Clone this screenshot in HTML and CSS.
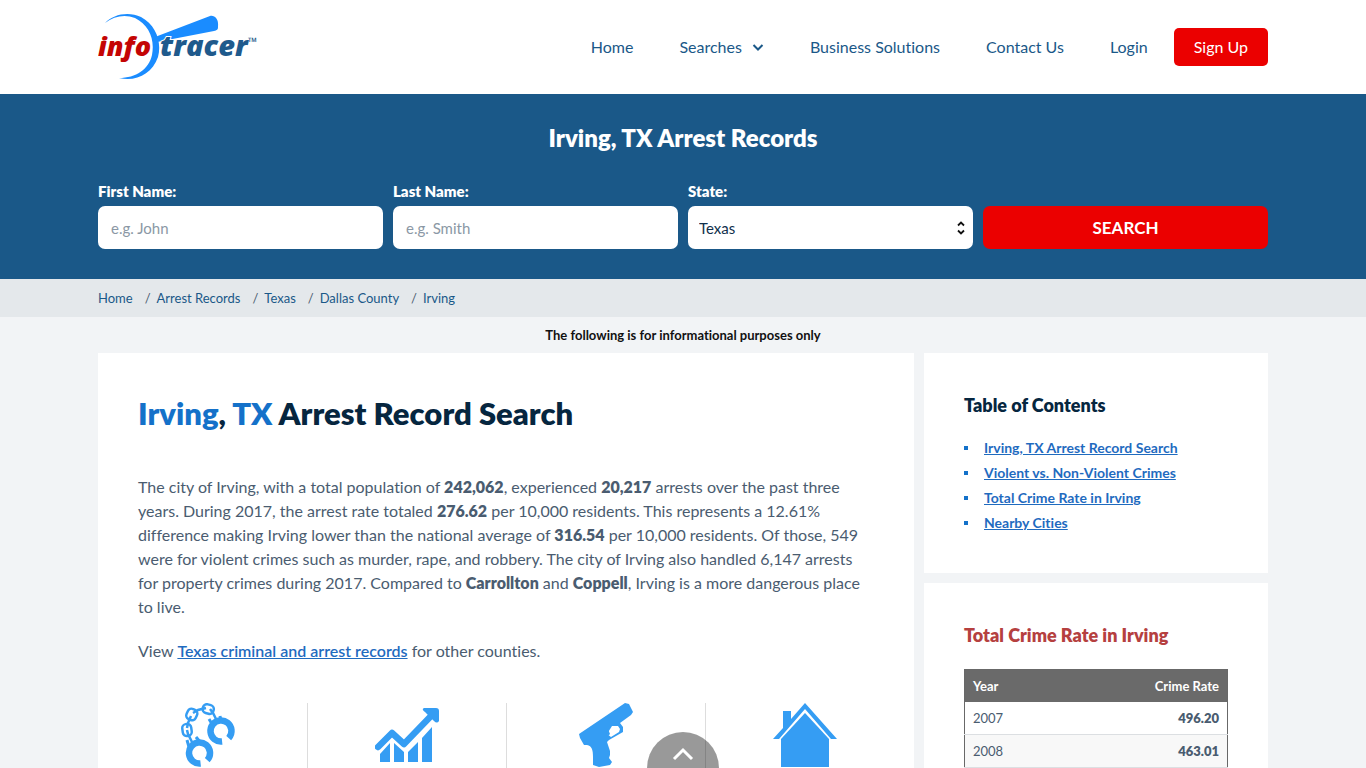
FILE: index.html
```html
<!DOCTYPE html>
<html lang="en">
<head>
<meta charset="utf-8">
<meta name="viewport" content="width=device-width, initial-scale=1">
<title>Irving, TX Arrest Records</title>
<link rel="stylesheet" href="styles.css">
</head>
<body>
<header class="site-header">
  <div class="container header-row">
    <a class="logo" href="#" aria-label="infotracer">
      <svg width="164" height="70" viewBox="0 0 164 70">
        <path d="M7 11C15 2 31 -1 43 5C58 13 64 30 60 45C54 62 38 70 21 66C38 66 51 57 54 43C57 27 51 13 37 6C27 2 16 4 7 11Z" fill="#1a8cff"/>
        <path d="M57 25L112 4C116 3 121 6 120 15C120 18 119 18 116 19L59 30Z" fill="#1a8cff"/>
        <text class="logo-text" x="0" y="44" fill="#c40404">info</text>
        <text class="logo-text logo-outline" x="62" y="44" fill="#1f5a8c">tracer</text>
        <text class="logo-mark" x="150" y="34" fill="#1f5a8c">™</text>
      </svg>
    </a>
    <nav class="nav">
      <a href="#">Home</a>
      <a href="#">Searches<svg class="chevron" width="12" height="8" viewBox="0 0 12 8"><path d="M1.500 1L6 5.500L10.500 1" fill="none" stroke="#1a5888" stroke-width="2"/></svg></a>
      <a href="#">Business Solutions</a>
      <a href="#">Contact Us</a>
      <a href="#">Login</a>
      <a class="signup" href="#">Sign Up</a>
    </nav>
  </div>
</header>
<section class="search">
  <div class="container">
    <h2 class="search-title">Irving, TX Arrest Records</h2>
    <form class="search-form">
      <div class="field"><label for="first">First Name:</label><input id="first" type="text" placeholder="e.g. John"></div>
      <div class="field"><label for="last">Last Name:</label><input id="last" type="text" placeholder="e.g. Smith"></div>
      <div class="field"><label for="state">State:</label>
        <div class="select-wrap">
          <select id="state"><option>Texas</option></select>
          <svg class="select-arrows" width="8" height="14" viewBox="0 0 8 14"><path d="M1 4.500L4 1.500L7 4.500M1 9.500L4 12.500L7 9.500" fill="none" stroke="#111" stroke-width="1.800"/></svg>
        </div>
      </div>
      <button class="search-button" type="button">SEARCH</button>
    </form>
  </div>
</section>
<nav class="crumb-bar" aria-label="Breadcrumb">
  <ol class="container crumbs">
    <li><a href="#">Home</a></li>
    <li><a href="#">Arrest Records</a></li>
    <li><a href="#">Texas</a></li>
    <li><a href="#">Dallas County</a></li>
    <li><a href="#">Irving</a></li>
  </ol>
</nav>
<p class="notice">The following is for informational purposes only</p>
<div class="container columns">
  <main class="card article">
    <h1><span class="place">Irving</span>, <span class="place">TX</span> Arrest Record Search</h1>
    <p>The city of Irving, with a total population of <b>242,062</b>, experienced <b>20,217</b> arrests over the past three years. During 2017, the arrest rate totaled <b>276.62</b> per 10,000 residents. This represents a 12.61% difference making Irving lower than the national average of <b>316.54</b> per 10,000 residents. Of those, 549 were for violent crimes such as murder, rape, and robbery. The city of Irving also handled 6,147 arrests for property crimes during 2017. Compared to <b>Carrollton</b> and <b>Coppell</b>, Irving is a more dangerous place to live.</p>
    <p>View <a class="link" href="#">Texas criminal and arrest records</a> for other counties.</p>
    <ul class="stats">
      <li>
        <svg width="64" height="66" viewBox="0 0 64 66" fill="none" stroke="#359df3">
          <circle cx="23.500" cy="50" r="10.500" stroke-width="6.500" stroke-dasharray="58 8" transform="rotate(84 23.500 50)"/>
          <circle cx="45" cy="28" r="10.500" stroke-width="6.500" stroke-dasharray="58 8" transform="rotate(84 45 28)"/>
          <path d="M13 44L11 37M25 40L20 34M36 21L33 16M45 18L44 13" stroke-width="3"/>
          <g stroke-width="2.500">
            <rect x="6.500" y="21" width="9" height="12" rx="4" transform="rotate(-8 11 27)"/>
            <rect x="11" y="6" width="10" height="11" rx="4" transform="rotate(25 16 11)"/>
            <rect x="27" y="1.500" width="11" height="9" rx="4" transform="rotate(15 32 5)"/>
            <path d="M11 27L12 31L16 39M11 25L12 20L15 13M17 10L22 7L30 5M34 6L37 10L40 16"/>
          </g>
        </svg>
      </li>
      <li>
        <svg width="64" height="66" viewBox="0 0 64 66" fill="#359df3">
          <path d="M3 44L17 30L29 41L56 13" fill="none" stroke="#359df3" stroke-width="6.500" stroke-linejoin="round" stroke-linecap="round"/>
          <path d="M49 5H61Q64 5 64 8V18Q62 21 59 18L50 9Q46 6 49 5Z"/>
          <path d="M5 51L15 40V59H5ZM19 40L29 49V59H19ZM33 49L43 39V59H33ZM47 35L57 24V59H47Z"/>
        </svg>
      </li>
      <li>
        <svg width="64" height="66" viewBox="0 0 64 66" fill="#359df3" fill-rule="evenodd">
          <path d="M5 31L51 0L55 1L59 9L57 12L46 20L49 24V29L35 37L33 39L36 48V52L35 55L38 59L36 62L25 64L19 62V54C19 47 18 43 13 42L10 42L6 35ZM33 31L37 34L45 29L46 26L44 23H38Z"/>
          <path d="M34 26L36 31L34 33L32 30Z"/>
        </svg>
      </li>
      <li>
        <svg width="64" height="66" viewBox="0 0 64 66" fill="#359df3">
          <path d="M0 36L10 25V8H18V16L32 0L64 36H58L32 6L6 36Z"/>
          <path d="M8 36L32 10L56 36V64H8Z"/>
        </svg>
      </li>
    </ul>
  </main>
  <aside class="sidebar">
    <section class="card toc">
      <h3>Table of Contents</h3>
      <ul>
        <li><a class="link" href="#">Irving, TX Arrest Record Search</a></li>
        <li><a class="link" href="#">Violent vs. Non-Violent Crimes</a></li>
        <li><a class="link" href="#">Total Crime Rate in Irving</a></li>
        <li><a class="link" href="#">Nearby Cities</a></li>
      </ul>
    </section>
    <section class="card rates">
      <h3>Total Crime Rate in Irving</h3>
      <table>
        <thead><tr><th scope="col">Year</th><th scope="col">Crime Rate</th></tr></thead>
        <tbody>
          <tr><td>2007</td><td>496.20</td></tr>
          <tr><td>2008</td><td>463.01</td></tr>
        </tbody>
      </table>
    </section>
  </aside>
</div>
<button class="to-top" type="button" aria-label="Back to top"><svg width="22" height="14" viewBox="0 0 22 14"><path d="M2 12L11 3L20 12" fill="none" stroke="#fff" stroke-width="3"/></svg></button>
</body>
</html>
```
FILE: styles.css
```css
* { box-sizing: border-box; }
body {
  margin: 0;
  background: #f2f4f6;
  color: #4a5c70;
  font: 16px/24px Lato, "Open Sans", sans-serif;
  font-variant-ligatures: none;
}
h1, h2, h3, p, ul, ol { margin: 0; padding: 0; }
ul, ol { list-style: none; }
a { color: #1a5888; text-decoration: none; }
.container { width: 100%; max-width: 1170px; margin: 0 auto; }

.site-header { background: #fff; }
.header-row { display: flex; align-items: center; justify-content: space-between; min-height: 94px; }
.logo svg { display: block; }
.logo-text { font: italic 800 27px "Open Sans", sans-serif; }
.logo-outline { font-size: 29px; stroke: #fff; stroke-width: 2px; paint-order: stroke; }
.logo-mark { font: bold 12px "Open Sans", sans-serif; }
.nav { display: flex; align-items: center; gap: 46px; }
.chevron { margin-left: 10px; vertical-align: 1px; }
.signup {
  margin-left: -20px;
  padding: 7px 20px;
  border-radius: 5px;
  background: #eb0000;
  color: #fff;
}

.search { background: #1a5888; color: #fff; padding: 28px 0 30px; }
.search-title { font-size: 24px; line-height: 32px; font-weight: 800; text-align: center; }
.search-form { display: grid; grid-template-columns: repeat(4, 1fr); gap: 10px; align-items: end; margin-top: 27px; }
.field label { display: block; margin-bottom: 5px; font-size: 15px; line-height: 20px; font-weight: 800; }
.field input, .field select, .search-button {
  display: block;
  width: 100%;
  height: 43px;
  border: 0;
  border-radius: 7px;
  font: 15px Lato, sans-serif;
}
.field input { padding: 0 13px; background: #fff; }
.field input::placeholder { color: #8b98a5; }
.select-wrap { position: relative; }
.field select { appearance: none; padding: 0 11px; background: #fff; color: #10304c; }
.select-arrows { position: absolute; right: 8px; top: 15px; pointer-events: none; }
.search-form .search-button { background: #eb0000; color: #fff; font-size: 17px; font-weight: bold; }

.crumb-bar { background: #e4e8eb; padding: 7px 0; }
.crumbs { display: flex; font-size: 13px; }
.crumbs li + li::before { content: "/"; margin: 0 6px 0 12px; }
.notice { padding: 6px 0; color: #111; font-size: 13px; font-weight: 700; text-align: center; }

.columns { display: grid; grid-template-columns: minmax(0, 1fr) 344px; gap: 10px; }
.card { background: #fff; padding: 40px; }
.article { padding-bottom: 0; }
.article h1 { margin-bottom: 40px; padding-bottom: 2px; color: #06263f; font-size: 31px; line-height: 40px; font-weight: 800; }
.article h1 .place { color: #1471c9; }
.article p { margin-bottom: 20px; }
.article b { font-weight: 800; }
.link { color: #1f6bbf; font-weight: 700; text-decoration: underline; }
.article .link { font-weight: 600; }
.stats { display: grid; grid-template-columns: repeat(4, 1fr); margin: 40px -30px 0; }
.stats li { display: flex; justify-content: center; }
.stats li + li { border-left: 1px solid #ddd; }

.sidebar { display: flex; flex-direction: column; gap: 10px; }
.sidebar h3 { font-size: 18px; line-height: 24px; color: #06263f; font-weight: 800; }
.toc { padding-bottom: 38px; line-height: 25px; font-size: 14px; }
.toc h3 { margin-bottom: 18px; }
.toc li { display: flex; align-items: center; }
.toc li::before { content: ""; width: 4px; height: 4px; margin-right: 16px; background: #1471c9; }
.sidebar .rates h3 { color: #b5403f; margin-bottom: 22px; }
.rates table { width: 100%; border-collapse: collapse; font-size: 13px; line-height: 20px; border: 1px solid #686868; }
.rates th { background: #6a6a6a; color: #fff; }
.rates th, .rates td { padding: 6px 8px; text-align: left; }
.rates td { border-bottom: 1px solid #dcdfe2; }
.rates tr > :last-child { text-align: right; }
.rates td:last-child { font-weight: 800; }
.rates tbody tr:nth-child(even) { background: #f8f8f8; }

.to-top {
  position: fixed;
  bottom: -36px;
  left: 50%;
  width: 72px;
  height: 72px;
  margin-left: -36px;
  padding: 0 0 28px;
  border: 0;
  border-radius: 50%;
  background: rgba(0, 0, 0, .4);
}
.to-top svg { display: block; margin: 0 auto; }
```
